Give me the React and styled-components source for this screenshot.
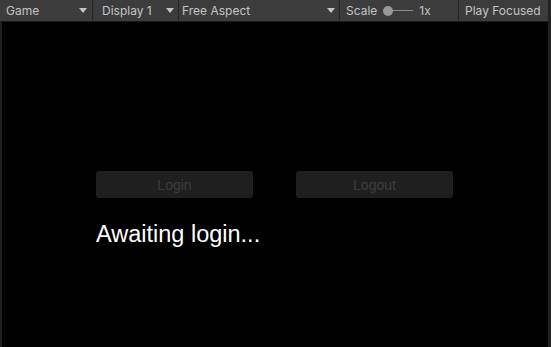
import React from 'react'
import styled, { createGlobalStyle } from 'styled-components'

var Global = createGlobalStyle`
  html, body {
    margin: 0;
    padding: 0;
    background: #000;
  }
`

var Window = styled.div`
  width: 551px;
  height: 347px;
  display: flex;
  flex-direction: column;
  background: #000;
  overflow: hidden;
`

var Toolbar = styled.div`
  height: 21px;
  display: flex;
  background: #3c3c3c;
  border-bottom: 1px solid #1a1a1a;
  border-right: 3px solid #232323;
  font-family: Inter, 'Noto Sans', sans-serif;
  font-size: 12px;
  color: #c4c4c4;
`

var Item = styled.div`
  width: ${p => p.w}px;
  display: flex;
  align-items: center;
  padding: 0 ${p => p.pr || 0}px 0 ${p => p.pl}px;
  box-sizing: border-box;
  border-right: 1px solid #262626;
  white-space: nowrap;
  &:last-child {
    border-right: none;
  }
`

var Label = styled.span`
  flex: 1;
`

var Arrow = styled.span`
  width: 0;
  height: 0;
  border-left: 4px solid transparent;
  border-right: 4px solid transparent;
  border-top: 5px solid #c4c4c4;
`

var Slider = styled.div`
  position: relative;
  width: 30px;
  height: 10px;
  margin: 0 6px 0 6px;
  display: flex;
  align-items: center;
  &::before {
    content: '';
    flex: 1;
    height: 1px;
    background: #8c8c8c;
  }
`

var Knob = styled.span`
  position: absolute;
  left: 0;
  top: 0;
  width: 10px;
  height: 10px;
  border-radius: 50%;
  background: #999;
`

var View = styled.div`
  flex: 1;
  border-left: 2px solid #1e1e1e;
  border-right: 3px solid #1e1e1e;
  padding: 149px 0 0 94px;
  display: flex;
  flex-direction: column;
  font-family: 'Liberation Sans', Arial, sans-serif;
`

var Buttons = styled.div`
  display: flex;
  gap: 43px;
`

var Button = styled.button`
  width: 157px;
  height: 27px;
  border: none;
  border-radius: 3px;
  background: #1f1f1f;
  color: #3c3c3c;
  font-family: 'Liberation Sans', Arial, sans-serif;
  font-size: 14px;
  padding: 0;
`

var Status = styled.div`
  margin-top: 24px;
  color: #fff;
  font-size: 23.5px;
  line-height: 24px;
`

export default function App () {
  return (
    <Window>
      <Global />
      <Toolbar>
        <Item w={93} pl={6} pr={5}>
          <Label>Game</Label>
          <Arrow />
        </Item>
        <Item w={86} pl={9} pr={4}>
          <Label>Display 1</Label>
          <Arrow />
        </Item>
        <Item w={161} pl={3} pr={4}>
          <Label>Free Aspect</Label>
          <Arrow />
        </Item>
        <Item w={119} pl={6}>
          <span>Scale</span>
          <Slider>
            <Knob />
          </Slider>
          <span>1x</span>
        </Item>
        <Item w={89} pl={6}>
          <span>Play Focused</span>
        </Item>
      </Toolbar>
      <View>
        <Buttons>
          <Button disabled>Login</Button>
          <Button disabled>Logout</Button>
        </Buttons>
        <Status>Awaiting login...</Status>
      </View>
    </Window>
  )
}
